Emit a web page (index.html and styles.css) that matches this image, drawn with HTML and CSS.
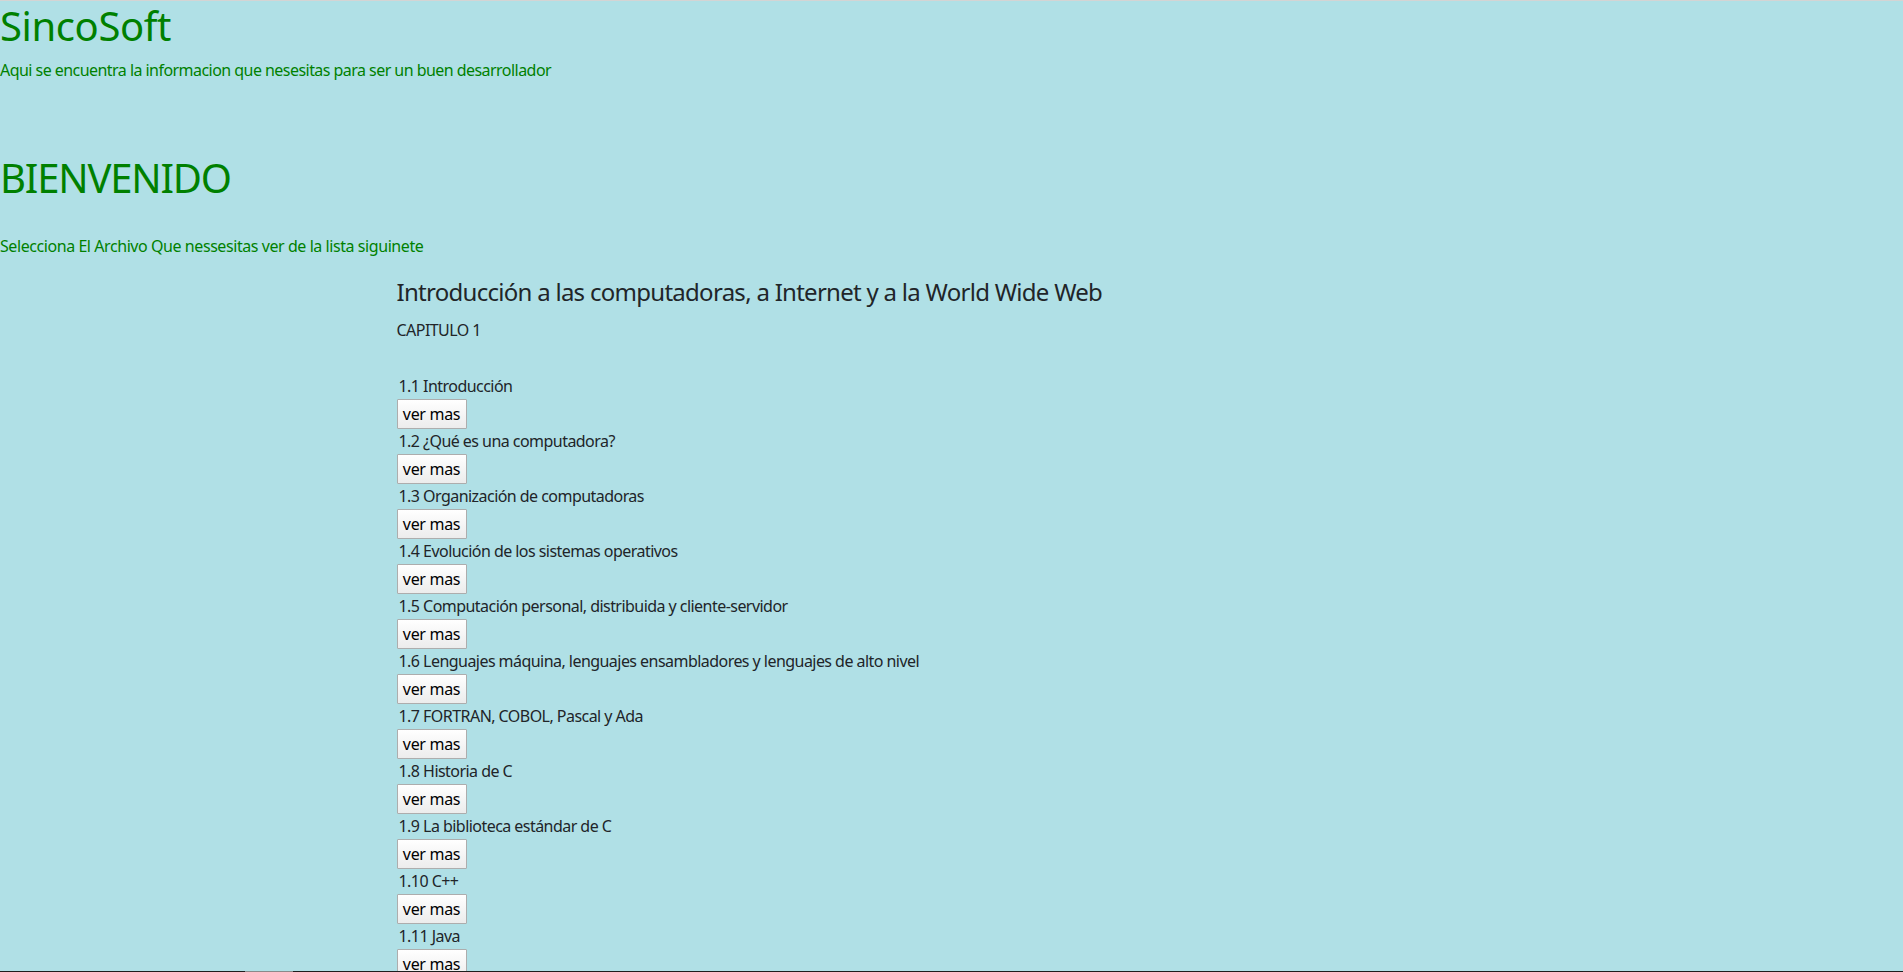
FILE: index.html
```html
<!DOCTYPE html>
<html lang="es">
<head>
<meta charset="utf-8">
<title>SincoSoft</title>
<link rel="stylesheet" href="styles.css">
</head>
<body>
<header class="site-header">
  <h1 class="brand">SincoSoft</h1>
  <p class="tagline">Aqui se encuentra la informacion que nesesitas para ser un buen desarrollador</p>
</header>
<section class="welcome">
  <h1 class="welcome-title">BIENVENIDO</h1>
  <p class="welcome-text">Selecciona El Archivo Que nessesitas ver de la lista siguinete</p>
</section>
<main class="container">
  <h4 class="chapter-title">Introducción a las computadoras, a Internet y a la World Wide Web</h4>
  <p class="chapter-label">CAPITULO 1</p>
  <ul class="topics">
    <li class="topic"><span class="topic-name">1.1 Introducción</span><button class="btn-more" type="button">ver mas</button></li>
    <li class="topic"><span class="topic-name">1.2 ¿Qué es una computadora?</span><button class="btn-more" type="button">ver mas</button></li>
    <li class="topic"><span class="topic-name">1.3 Organización de computadoras</span><button class="btn-more" type="button">ver mas</button></li>
    <li class="topic"><span class="topic-name">1.4 Evolución de los sistemas operativos</span><button class="btn-more" type="button">ver mas</button></li>
    <li class="topic"><span class="topic-name">1.5 Computación personal, distribuida y cliente-servidor</span><button class="btn-more" type="button">ver mas</button></li>
    <li class="topic"><span class="topic-name">1.6 Lenguajes máquina, lenguajes ensambladores y lenguajes de alto nivel</span><button class="btn-more" type="button">ver mas</button></li>
    <li class="topic"><span class="topic-name">1.7 FORTRAN, COBOL, Pascal y Ada</span><button class="btn-more" type="button">ver mas</button></li>
    <li class="topic"><span class="topic-name">1.8 Historia de C</span><button class="btn-more" type="button">ver mas</button></li>
    <li class="topic"><span class="topic-name">1.9 La biblioteca estándar de C</span><button class="btn-more" type="button">ver mas</button></li>
    <li class="topic"><span class="topic-name">1.10 C++</span><button class="btn-more" type="button">ver mas</button></li>
    <li class="topic"><span class="topic-name">1.11 Java</span><button class="btn-more" type="button">ver mas</button></li>
  </ul>
</main>
<div class="frame-bottom"><span class="frame-thumb"></span></div>
</body>
</html>
```
FILE: styles.css
```css
html {
  overflow: hidden;
}

body {
  margin: 0;
  background: #b0e0e6;
  border-top: 1px solid #d4d4d4;
  font-family: "Noto Sans", "Open Sans", sans-serif;
  font-size: 16px;
  line-height: 24px;
  letter-spacing: -0.034em;
  color: #212529;
}

.site-header,
.welcome {
  color: #008000;
}

.brand {
  margin: 0 0 8px;
  padding-top: 1px;
  font-size: 40px;
  line-height: 48px;
  font-weight: 400;
  letter-spacing: -0.01em;
}

.tagline {
  margin: 0;
}

.welcome-title {
  margin: 72px 0 0;
  font-size: 40px;
  line-height: 48px;
  font-weight: 400;
  letter-spacing: -0.03em;
}

.welcome-text {
  margin: 32px 0 0;
  letter-spacing: -0.027em;
}

.container {
  width: 1140px;
  margin: 0 auto;
  padding: 0 15px;
  box-sizing: border-box;
}

.chapter-title {
  margin: 20px 0 0;
  font-size: 24px;
  line-height: 28.8px;
  font-weight: 400;
  letter-spacing: -0.03em;
}

.chapter-label {
  margin: 11px 0 0;
}

.topics {
  list-style: none;
  margin: 32px 0 0;
  padding: 0;
}

.topic {
  display: flex;
  flex-direction: column;
  align-items: flex-start;
}

.topic-name {
  padding-left: 2px;
}

.btn-more {
  margin-top: 1px;
  width: 70px;
  height: 30px;
  padding: 0;
  box-sizing: border-box;
  border: 1px solid #adadad;
  border-radius: 1px;
  background: linear-gradient(#ffffff, #ececec);
  font-family: inherit;
  font-size: 16px;
  line-height: 24px;
  letter-spacing: -0.02em;
  color: #000;
}

.frame-bottom {
  position: fixed;
  left: 0;
  right: 0;
  bottom: 0;
  height: 1px;
  background: #1e1e1e;
}

.frame-thumb {
  position: absolute;
  left: 245px;
  width: 48px;
  top: 0;
  height: 1px;
  background: #8a8a8a;
}
```
